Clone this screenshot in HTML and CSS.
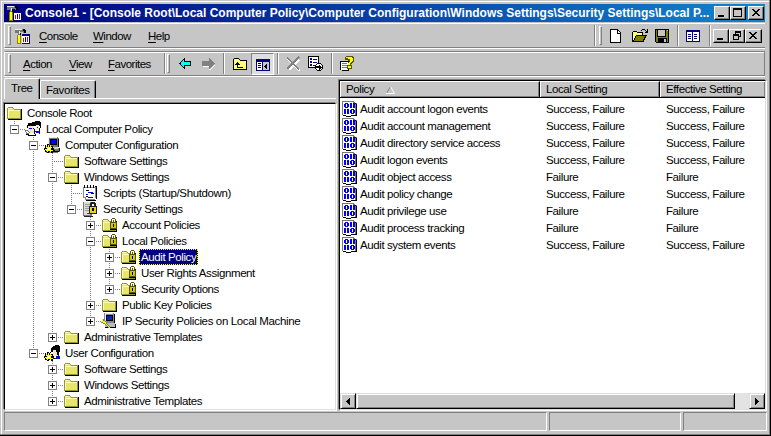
FILE: index.html
```html
<!DOCTYPE html>
<html lang="en">
<head>
<meta charset="utf-8">
<title>Console1</title>
<link rel="stylesheet" href="styles.css">
</head>
<body>
<svg class="sprite" aria-hidden="true">
  <symbol id="app" viewBox="0 0 16 16">
    <path fill="#777" d="M1 1h8v1h2v3H9V4H6v3H4V5H1z"/><path fill="#eee" d="M1 1h7v1H1zM5 3h1v3H5z"/><path fill="#000" d="M9 1h2v1h1v3h-2V3H9zM6 5h1v2H6z"/>
    <path fill="#880" d="M3 7h4v9H3z"/><path fill="#ff0" d="M4 7h2v8H4z"/>
    <path fill="#000080" d="M8 6h8v10H8z"/><path fill="#fff" d="M8 8h7v7H8z"/><path fill="#d00" d="M9 10h1v4H9zM13 9h1v5h-1z"/><path fill="#00c" d="M11 9h1v5h-1z"/>
  </symbol>
  <symbol id="folder" viewBox="0 0 16 16">
    <path fill="#000" d="M2 14h13V4h1v11H2z"/><path fill="#949432" d="M1 3h1V2h5v1h1v1h7v10H1z"/><path fill="#e6e66a" d="M2 3h5v1h1v1h6v8H2z"/><path fill="#ffffb4" d="M2 3h4v1H2zM2 5h1v8H2zM3 5h11v1H3z"/>
  </symbol>
  <symbol id="lockfolder" viewBox="0 0 16 16">
    <use href="#folder"/><path fill="#550" d="M10 2h1V1h3v1h1v3h1v7H9V5h1z"/><path fill="#fff" d="M11 2h3v3h-3z"/><path fill="#550" d="M12 3h1v2h-1z"/><path fill="#d2c800" d="M10 6h5v5h-5z"/><path fill="#000" d="M12 7h1v3h-1zM9 12h7v1H9z"/>
  </symbol>
  <symbol id="people" viewBox="0 0 16 16">
    <path fill="#000" d="M3 2h4V1h3V0h5v1h1v6h-1V5h-2v2h-2V5H4v2H2V4h1z"/><path fill="#f4e6c8" d="M3 5h6v2h1v3H9v3H4v-2H3zM11 4h3v5h-3z"/><path fill="#00f" d="M4 7h3v1H4zM8 7h1v1H8zM12 6h1v1h-1zM10 10h5v2h-4z"/><path fill="#000080" d="M9 8h1v5H9zM14 7h1v6h-1z"/><path fill="#777" d="M0 9h3v1h1v1h1v2H1v-2H0z"/><path fill="#000" d="M1 13h3v1h6v-1h1v2H3v-1H1z"/><path fill="#fff" d="M1 10h2v1h1v1H2v-1H1zM4 12h4v1H4z"/>
  </symbol>
  <symbol id="pc" viewBox="0 0 16 16">
    <path fill="#777" d="M4 0h10v1h1v9h-1v1h2v4h-2v1H2v-4h2z"/><path fill="#eee" d="M4 0h9v1H5v9H4z"/><path fill="#000" d="M6 2h7v6H6zM14 2h1v8h-1zM4 14h11v1H4zM15 11h1v3h-1z"/><path fill="#00f" d="M7 3h5v4H7z"/><path fill="#ccc" d="M5 10h9v2H5z"/>
    <path fill="#000" d="M1 8h1v1h1V7h2v1h1V7h1v2h2v2h1v2h1v1H9v2H7v-1H5v1H3v-1H1v-2H0v-2h1z"/><path fill="#ff0" d="M2 9h1v1h1V8h1v2h1V8h1v2h1v1H7v2h2v1H7v1H6v-1H4v1H3v-1H2v-1H1v-1h2v-1H2z"/><path fill="#fff" d="M4 11h2v2H4z"/>
  </symbol>
  <symbol id="script" viewBox="0 0 16 16">
    <path fill="#888" d="M1 2h13v11h-1v2H3v-2H1z"/><path fill="#fff" d="M2 3h11v11H4v-2H2z"/><path fill="#000" d="M2 0h1v3H2zM5 0h1v3H5zM8 0h1v3H8zM11 0h1v3h-1zM14 2h1v12h-1zM4 15h10v1H4zM13 1h2v1h-2zM4 5h3v1H4zM4 11h2v1H4zM9 8h3v1H9z"/><path fill="#00f" d="M6 7h5v1H6zM6 12h5v1H6zM4 9h2v1H4z"/>
  </symbol>
  <symbol id="server" viewBox="0 0 16 16">
    <path fill="#777" d="M1 1h9v14H1z"/><path fill="#ddd" d="M2 1h6v13H2z"/><path fill="#999" d="M3 3h5v1H3zM3 5h5v1H3zM3 7h5v1H3zM3 9h5v1H3z"/><path fill="#d00" d="M5 12h3v1H5z"/><path fill="#222" d="M2 15h9v1H2zM8 2h1V1h4v1h1v3h1v8H7V5h1z"/><path fill="#fff" d="M10 3h2v2h-2z"/><path fill="#e6d800" d="M8 6h6v6H8z"/><path fill="#000" d="M10 7h2v3h-2z"/>
  </symbol>
  <symbol id="ipsec" viewBox="0 0 16 16">
    <path fill="#888" d="M3 0h10v1h1v10H4V9H3z"/><path fill="#eee" d="M4 0h8v1H5v7H4z"/><path fill="#000" d="M5 2h7v6H5zM13 1h1v9h-1zM4 14h11v1H4zM14 11h1v3h-1z"/><path fill="#0028a8" d="M6 3h5v4H6z"/><path fill="#bbb" d="M4 10h10v4H4z"/><path fill="#777" d="M1 6h2v1h1v1h1v2h1v1h1v1h1v1h1v2H7v-1H6v-1H5v-1H4v-1H2v-1H0V8h1z"/><path fill="#ff0" d="M1 6h1v2h2v1h1v2h1v1h1v1h1v1h1v1H8v-1H7v-1H6v-1H5v-1H4v-1H2V9H0V8h1z"/>
  </symbol>
  <symbol id="user" viewBox="0 0 16 16">
    <path fill="#000" d="M8 2h1V1h2V0h4v1h1v6h-1v3h-2V7h-1V5H9v2H7V3h1z"/><path fill="#f4e6c8" d="M9 5h3v2h1v3h1v1h-3v1H9z"/><path fill="#0018b8" d="M12 11h2v-1h1v1h1v3h-6v-1h2z"/>
    <path fill="#000" d="M1 8h1v1h1V7h2v1h1V7h1v2h2v2h1v2h1v1H9v2H7v-1H5v1H3v-1H1v-2H0v-2h1z"/><path fill="#ff0" d="M2 9h1v1h1V8h1v2h1V8h1v2h1v1H7v2h2v1H7v1H6v-1H4v1H3v-1H2v-1H1v-1h2v-1H2z"/><path fill="#fff" d="M4 11h2v2H4z"/>
  </symbol>
  <symbol id="binary" viewBox="0 0 16 16">
    <path fill="#777" d="M0 0h12v1h1v1h2v12H0z"/><path fill="#fff" d="M1 1h10v2h2v11H1z"/><path fill="#000" d="M14 3h1v12h-3v-1h2zM1 14h3v1H1zM4 15h5v-1h3v1H9v1H4zM12 2h2v1h-2z"/>
    <path fill="#00f" fill-rule="evenodd" d="M2 3h1V2h3v1h1v3H6v1H3V6H2zM4 3v3h1V3zM8 2h2v5H8zM11 2h2v5h-2zM2 8h2v5H2zM5 8h2v5H5zM8 9h1V8h3v1h1v3h-1v1H9v-1H8zM10 9v3h1V9z"/>
  </symbol>
  <symbol id="back" viewBox="0 0 16 16"><path fill="#000" d="M6 2h1v3h6v5H7v3H6v-1H5v-1H4v-1H3V9H2V8H1V7h1V6h1V5h1V4h1V3h1z"/><path fill="#0ff" d="M5 4h1v2h6v3H6v2H5v-1H4V9H3V6h1V5h1z"/></symbol>
  <symbol id="forward" viewBox="0 0 16 16"><path fill="#fff" d="M2 10h7v3h1v-1h1v-1h1v-1h1V9h1v1h-1v1h-1v1h-1v1h-1v1H8v-3H2z"/><path fill="#808080" d="M8 2h1v1h1v1h1v1h1v1h1v1h1v1h-1v1h-1v1h-1v1h-1v1H9v1H8v-3H1V5h7z"/></symbol>
  <symbol id="up" viewBox="0 0 16 16"><path fill="#000" d="M1 3h1V2h5v1h1v1h7v10H1z"/><path fill="#ffff7b" d="M2 3h5v1h1v1h6v8H2z"/><path fill="#000" d="M5 6h1v1h1v1h1v1H6v2h5v1H5V9H3V8h1V7h1z"/></symbol>
  <symbol id="pane" viewBox="0 0 16 16"><path fill="#000080" d="M1 2h14v12H1z"/><path fill="#fff" d="M2 5h5v8H2z"/><path fill="#c6c6c6" d="M8 5h6v8H8z"/><path fill="#000" d="M3 6h3v1H3zM3 8h3v1H3zM3 10h3v1H3zM9 9h1V8h1V7h1v5h-1v-1h-1v-1H9z"/></symbol>
  <symbol id="delete" viewBox="0 0 16 16"><path fill="none" stroke="#fff" stroke-width="1.5" d="M3 3l12 12M14 4L4 14"/><path fill="none" stroke="#808080" stroke-width="1.5" d="M2 2l12 11M14 1L2 13"/></symbol>
  <symbol id="export" viewBox="0 0 16 16"><path fill="#000" d="M1 0h11v12H1z"/><path fill="#fff" d="M2 1h9v10H2z"/><path fill="#000080" d="M3 2h2v2H3zM3 5h2v2H3zM3 8h2v2H3zM6 3h4v1H6zM6 6h4v1H6zM6 9h3v1H6z"/><path fill="#000" d="M10 7h4v1h1v1h1v4h-1v1h-1v1h-4v-1H9v-1H8V9h1V8h1z"/><path fill="#fff" d="M10 8h4v1h1v4h-1v1h-4v-1H9V9h1z"/><path fill="#000" d="M9 10h3V9h1v1h1v1h1v1h-1v1h-1v1h-1v-2H9z"/></symbol>
  <symbol id="help" viewBox="0 0 16 16"><path fill="#000" d="M1 5h9v10H3v-1H1z"/><path fill="#fff" d="M2 6h7v8H2z"/><path fill="#777" d="M3 7h5v1H3zM3 9h5v1H3zM3 11h5v1H3z"/><path fill="#550" d="M6 1h1V0h7v1h1v5h-1v1h-1v1h-1v1h1v4H8V9h1V6h1V5H9V4H6z"/><path fill="#ff0" d="M7 1h6v1h1v3h-1v1h-1v1h-1v2H9V7h1V6h1V3H9V2H7zM9 10h3v2H9z"/></symbol>
  <symbol id="new" viewBox="0 0 16 16"><path fill="#000" d="M2 1h8v1h1v1h1v1h1v11H2z"/><path fill="#fff" d="M3 2h6v4h3v8H3zM10 3h1v1h1v1h-2z"/></symbol>
  <symbol id="open" viewBox="0 0 16 16"><path fill="#000" d="M9 2h1V1h3v1h1v1h1V1h1v4h-3V4h1V3h-1V2h-3v1H9zM0 4h1V3h4v1h6v3h4v1h-1v2h-1v2h-1v2H0z"/><path fill="#ffff8c" d="M1 4h4v1h5v2H4v1H3v2H2v2H1z"/><path fill="#808000" d="M4 8h9v1h-1v2h-1v2H2v-1h1v-2h1z"/></symbol>
  <symbol id="save" viewBox="0 0 16 16"><path fill="#000" d="M1 1h14v14H2v-1H1z"/><path fill="#808000" d="M2 2h12v12H2z"/><path fill="#000" d="M3 2h9v7H3zM4 10h9v4H4z"/><path fill="#c6c6c6" d="M4 2h7v6H4zM10 11h2v3h-2zM13 2h1v1h-1z"/></symbol>
  <symbol id="columns" viewBox="0 0 16 16"><path fill="#000080" d="M1 2h14v12H1z"/><path fill="#fff" d="M2 4h5v9H2zM8 4h6v9H8z"/><path fill="#000080" d="M3 6h3v1H3zM3 8h3v1H3zM3 10h3v1H3zM9 6h3v1H9zM9 8h3v1H9zM9 10h3v1H9z"/></symbol>
  <symbol id="min" viewBox="0 0 12 10"><path d="M2 7h6v2H2z"/></symbol>
  <symbol id="max" viewBox="0 0 12 10"><path fill-rule="evenodd" d="M1 0h9v9H1zM2 2v6h7V2z"/></symbol>
  <symbol id="restore" viewBox="0 0 12 10"><path fill-rule="evenodd" d="M4 0h6v6H8v3H2V3h2zM5 2v1h3v2h1V2zM3 5v3h4V5z"/></symbol>
  <symbol id="close" viewBox="0 0 12 10"><path d="M2 1h2v1h1v1h2V2h1V1h2v1H9v1H8v1H7v1h1v1h1v1h1v1H8V7H7V6H5v1H4v1H2V7h1V6h1V5h1V4H4V3H3V2H2z"/></symbol>
</svg>

<div class="window">
  <header class="title">
    <svg class="icon"><use href="#app"/></svg>
    <h1>Console1 - [Console Root\Local Computer Policy\Computer Configuration\Windows Settings\Security Settings\Local P...</h1>
    <div class="controls">
      <button><svg><use href="#min"/></svg></button><button><svg><use href="#max"/></svg></button><button class="gap"><svg><use href="#close"/></svg></button>
    </div>
  </header>

  <div class="bar menubar">
    <i class="grip"></i>
    <svg class="icon"><use href="#app"/></svg>
    <nav><span class="console"><u>C</u>onsole</span><span class="win"><u>W</u>indow</span><span><u>H</u>elp</span></nav>
    <div class="tools">
      <i class="sep"></i><i class="grip"></i>
      <svg class="icon new"><use href="#new"/></svg><svg class="icon open"><use href="#open"/></svg><svg class="icon save"><use href="#save"/></svg>
      <i class="sep"></i><svg class="icon cols"><use href="#columns"/></svg><i class="sep"></i>
      <div class="controls"><button><svg><use href="#min"/></svg></button><button><svg><use href="#restore"/></svg></button><button class="wide"><svg><use href="#close"/></svg></button></div>
    </div>
  </div>

  <div class="bar toolbar">
    <i class="grip"></i>
    <nav><span class="action"><u>A</u>ction</span><span class="view"><u>V</u>iew</span><span class="fav"><u>F</u>avorites</span></nav>
    <i class="sep"></i><i class="grip"></i>
    <svg class="icon back"><use href="#back"/></svg><svg class="icon forward"><use href="#forward"/></svg>
    <i class="sep"></i><svg class="icon up"><use href="#up"/></svg>
    <span class="pressed"><svg class="icon"><use href="#pane"/></svg></span>
    <i class="sep"></i><svg class="icon del"><use href="#delete"/></svg><svg class="icon exp"><use href="#export"/></svg>
    <i class="sep"></i><svg class="icon help"><use href="#help"/></svg>
  </div>

  <main>
    <section class="left">
      <div class="tabs"><span class="tab active">Tree</span><span class="tab favorites">Favorites</span></div>
      <div class="treebox">
        <div class="root"><svg class="icon"><use href="#folder"/></svg><span>Console Root</span></div>
        <ul>
          <li><div class="row"><i class="box"></i><svg class="icon"><use href="#people"/></svg><span>Local Computer Policy</span></div>
            <ul>
              <li><div class="row"><i class="box"></i><svg class="icon"><use href="#pc"/></svg><span>Computer Configuration</span></div>
                <ul>
                  <li><div class="row"><svg class="icon"><use href="#folder"/></svg><span>Software Settings</span></div></li>
                  <li><div class="row"><i class="box"></i><svg class="icon"><use href="#folder"/></svg><span>Windows Settings</span></div>
                    <ul>
                      <li><div class="row"><svg class="icon"><use href="#script"/></svg><span class="loose">Scripts (Startup/Shutdown)</span></div></li>
                      <li><div class="row"><i class="box"></i><svg class="icon"><use href="#server"/></svg><span>Security Settings</span></div>
                        <ul>
                          <li><div class="row"><i class="box plus"></i><svg class="icon"><use href="#lockfolder"/></svg><span>Account Policies</span></div></li>
                          <li><div class="row"><i class="box"></i><svg class="icon"><use href="#lockfolder"/></svg><span>Local Policies</span></div>
                            <ul>
                              <li><div class="row"><i class="box plus"></i><svg class="icon"><use href="#lockfolder"/></svg><span class="selected">Audit Policy</span></div></li>
                              <li><div class="row"><i class="box plus"></i><svg class="icon"><use href="#lockfolder"/></svg><span>User Rights Assignment</span></div></li>
                              <li><div class="row"><i class="box plus"></i><svg class="icon"><use href="#lockfolder"/></svg><span>Security Options</span></div></li>
                            </ul>
                          </li>
                          <li><div class="row"><i class="box plus"></i><svg class="icon"><use href="#folder"/></svg><span>Public Key Policies</span></div></li>
                          <li><div class="row"><i class="box plus"></i><svg class="icon"><use href="#ipsec"/></svg><span class="loose">IP Security Policies on Local Machine</span></div></li>
                        </ul>
                      </li>
                    </ul>
                  </li>
                  <li><div class="row"><i class="box plus"></i><svg class="icon"><use href="#folder"/></svg><span>Administrative Templates</span></div></li>
                </ul>
              </li>
              <li><div class="row"><i class="box"></i><svg class="icon"><use href="#user"/></svg><span>User Configuration</span></div>
                <ul>
                  <li><div class="row"><i class="box plus"></i><svg class="icon"><use href="#folder"/></svg><span>Software Settings</span></div></li>
                  <li><div class="row"><i class="box plus"></i><svg class="icon"><use href="#folder"/></svg><span>Windows Settings</span></div></li>
                  <li><div class="row"><i class="box plus"></i><svg class="icon"><use href="#folder"/></svg><span>Administrative Templates</span></div></li>
                </ul>
              </li>
            </ul>
          </li>
        </ul>
      </div>
    </section>

    <section class="right">
      <div class="grid head"><span>Policy <svg class="sort" viewBox="0 0 9 8"><path d="M0.5 7.5L4.5 0.5" stroke="#808080" fill="none"/><path d="M4.5 .5L8.5 7.5H0" stroke="#fff" fill="none"/></svg></span><span>Local Setting</span><span>Effective Setting</span></div>
      <div class="rows">
        <div class="grid"><b><svg class="icon"><use href="#binary"/></svg>Audit account logon events</b><span>Success, Failure</span><span>Success, Failure</span></div>
        <div class="grid"><b><svg class="icon"><use href="#binary"/></svg>Audit account management</b><span>Success, Failure</span><span>Success, Failure</span></div>
        <div class="grid"><b><svg class="icon"><use href="#binary"/></svg>Audit directory service access</b><span>Success, Failure</span><span>Success, Failure</span></div>
        <div class="grid"><b><svg class="icon"><use href="#binary"/></svg>Audit logon events</b><span>Success, Failure</span><span>Success, Failure</span></div>
        <div class="grid"><b><svg class="icon"><use href="#binary"/></svg>Audit object access</b><span>Failure</span><span>Failure</span></div>
        <div class="grid"><b><svg class="icon"><use href="#binary"/></svg>Audit policy change</b><span>Success, Failure</span><span>Success, Failure</span></div>
        <div class="grid"><b><svg class="icon"><use href="#binary"/></svg>Audit privilege use</b><span>Failure</span><span>Failure</span></div>
        <div class="grid"><b><svg class="icon"><use href="#binary"/></svg>Audit process tracking</b><span>Failure</span><span>Failure</span></div>
        <div class="grid"><b><svg class="icon"><use href="#binary"/></svg>Audit system events</b><span>Success, Failure</span><span>Success, Failure</span></div>
      </div>
      <div class="scroll"><i class="arrow"><svg viewBox="0 0 4 7"><path d="M4 0v7L0 3.5z"/></svg></i><i class="thumb"></i><i class="arrow"><svg viewBox="0 0 4 7"><path d="M0 0v7l4-3.5z"/></svg></i></div>
    </section>
  </main>

  <footer><i></i><i></i><i></i></footer>
</div>
</body>
</html>
```

FILE: styles.css
```css
* { box-sizing: border-box; }
body {
  margin: 0;
  width: 771px;
  height: 436px;
  overflow: hidden;
  background: #000;
  color: #000;
  font: 11.5px/16px "Liberation Sans", Arial, sans-serif;
  letter-spacing: -0.4px;
  white-space: nowrap;
}
i, b { font-style: normal; font-weight: normal; display: block; flex: none; }
ul { list-style: none; margin: 0; padding: 0; }
svg { display: block; flex: none; shape-rendering: crispEdges; }
.sprite { position: absolute; width: 0; height: 0; }
.icon { width: 16px; height: 16px; }

.window {
  width: 770px;
  height: 435px;
  padding: 4px 3px 0 4px;
  background: #c6c6c6;
  border-right: 1px solid #808080;
  border-bottom: 1px solid #808080;
  box-shadow: inset 1px 1px #c6c6c6, inset 2px 2px #fff;
  display: flex;
  flex-direction: column;
}

.title {
  display: flex;
  align-items: center;
  flex: none;
  height: 18px;
  margin-right: 1px;
  padding: 0 1px 0 2px;
  background: linear-gradient(90deg, #000080, #1084d0);
  color: #fff;
}
.title h1 { margin: 0 0 0 3px; width: 685px; font-size: 12px; line-height: 18px; letter-spacing: 0; flex: none; }
.controls { display: flex; margin-left: auto; }
.controls button {
  width: 16px;
  height: 14px;
  padding: 1px;
  border: 1px solid;
  border-color: #fff #000 #000 #fff;
  box-shadow: inset -1px -1px #808080;
  background: #c6c6c6;
}
.controls button svg { width: 12px; height: 10px; }
.controls .gap { margin-left: 2px; }

.bar { display: flex; align-items: center; flex: none; }
.menubar { height: 25px; margin-top: 1px; border-top: 1px solid #fff; border-bottom: 1px solid #808080; border-left: 1px solid #fff; margin-right: 1px; padding-left: 3px; box-shadow: 0 1px #fff; }
.toolbar { height: 25px; margin: 3px 1px 0 0; border: 1px solid #808080; border-left-color: #fff; box-shadow: inset 0 1px #fff, 0 1px #fff; padding-left: 3px; }
.grip { width: 3px; height: 19px; border: 1px solid; border-color: #fff #808080 #808080 #fff; }
.sep { width: 2px; height: 21px; border-left: 1px solid #808080; border-right: 1px solid #fff; }
nav { display: flex; letter-spacing: -0.5px; }
u { text-underline-offset: 2px; }
.menubar > .icon { margin-left: 3px; }
.menubar nav { margin-left: 9px; }
.console { width: 54px; }
.win { width: 55px; }
.tools { display: flex; align-items: center; margin-left: auto; }
.tools .grip { margin-left: 3px; }
.new { margin-left: 6px; }
.open { margin-left: 8px; }
.save { margin-left: 6px; }
.tools .save + .sep { margin-left: 7px; }
.cols { margin: 0 8px 0 6px; }
.tools .controls { margin: 0 3px 0 2px; }
.tools .wide { width: 17px; }

.toolbar nav { margin-left: 12px; }
.action { width: 46px; }
.view { width: 39px; }
.fav { width: 56px; }
.toolbar .sep + .grip { margin-left: 1px; }
.back { margin-left: 8px; }
.forward { margin: 0 6px 0 7px; }
.up { margin: 0 3px 0 7px; }
.pressed { width: 23px; height: 22px; padding: 3px; border: 1px solid; border-color: #808080 #fff #fff #808080; background: #dedede; margin-right: 3px; }
.del { margin: 0 6px; }
.exp { margin-right: 8px; }
.help { margin-left: 6px; }

main { display: flex; flex: none; height: 333px; margin-top: 2px; }
.left { width: 332px; flex: none; margin-top: 0; }
.tabs { display: flex; align-items: flex-end; height: 21px; border-bottom: 1px solid #fff; }
.tab { height: 18px; border: 1px solid; border-color: #fff #000 transparent #fff; border-bottom: 0; box-shadow: inset -1px 0 #808080; padding-left: 6px; line-height: 18px; border-radius: 2px 2px 0 0; }
.tab.active { width: 36px; height: 21px; margin-bottom: -1px; background: #c6c6c6; line-height: 18px; }
.favorites { width: 56px; padding-left: 5px; }
.treebox { height: 307px; margin-top: 4px; background: #fff; border: 1px solid; border-color: #000 #dedede #dedede #000; box-shadow: 1px 1px #fff, -1px -1px #808080; }
.root, .row { display: flex; align-items: center; height: 16px; position: relative; }
.root { margin-top: 1px; padding-left: 1px; }
.root span, .row span { margin-left: 3px; padding: 0 2px; height: 16px; line-height: 17px; }
.root .icon, .row .icon { margin-top: -1px; }
.row .loose { letter-spacing: -0.36px; }
.treebox ul ul { margin-left: 19px; }
li { position: relative; }
li::before { content: ""; position: absolute; left: 9px; top: 0; bottom: 0; width: 1px; background: repeating-linear-gradient(#808080 0 1px, #fff 1px 2px); }
li:last-child::before { bottom: auto; height: 9px; }
.row { padding-left: 20px; }
.row::before { content: ""; position: absolute; left: 9px; top: 8px; width: 11px; height: 1px; background: repeating-linear-gradient(90deg, #808080 0 1px, #fff 1px 2px); }
.box { position: absolute; left: 5px; top: 4px; width: 9px; height: 9px; border: 1px solid #808080; background: linear-gradient(#000, #000) center / 5px 1px no-repeat #fff; }
.plus { background: linear-gradient(#000, #000) center / 5px 1px no-repeat, linear-gradient(#000, #000) center / 1px 5px no-repeat, #fff; }
.row .selected { background: #000080; color: #fff; outline: 1px dotted #ff0; outline-offset: -1px; }

.right { width: 427px; margin: 2px 0 0 3px; height: 330px; border: 1px solid; border-color: #000 #dedede #dedede #000; box-shadow: 1px 1px #fff, -1px -1px #808080; background: #fff; display: flex; flex-direction: column; }
.grid { display: grid; grid-template-columns: 200px 120px 1fr; height: 17px; line-height: 17px; }
.head { height: 17px; flex: none; background: #c6c6c6; border-bottom: 1px solid #000; line-height: 17px; }
.head span { border-top: 1px solid #fff; border-left: 1px solid #fff; border-right: 1px solid #000; box-shadow: inset -1px -1px #808080; padding-left: 5px; display: flex; align-items: center; height: 16px; }
.head span:last-child { border-right: 0; }
.sort { width: 9px; height: 8px; margin-left: 12px; shape-rendering: auto; }
.rows { padding-top: 3px; flex: 1; }
.rows b { display: flex; align-items: center; padding-left: 2px; }
.rows b .icon { margin: -1px 2px 0 0; }
.rows span { padding-left: 6px; }
.scroll { display: flex; height: 16px; background: #e3e3e3; }
.arrow, .thumb { border: 1px solid; border-color: #dedede #000 #000 #dedede; box-shadow: inset 1px 1px #fff, inset -1px -1px #808080; background: #c6c6c6; }
.arrow { width: 16px; display: flex; align-items: center; justify-content: center; }
.arrow:last-child { margin-left: auto; }
.arrow svg { width: 4px; height: 7px; }
.thumb { width: 379px; }

footer { display: grid; grid-template-columns: 543px 132px 84px; gap: 2px; height: 19px; margin-top: 1px; flex: none; }
footer i { border: 1px solid; border-color: #808080 #fff #fff #808080; }
```
